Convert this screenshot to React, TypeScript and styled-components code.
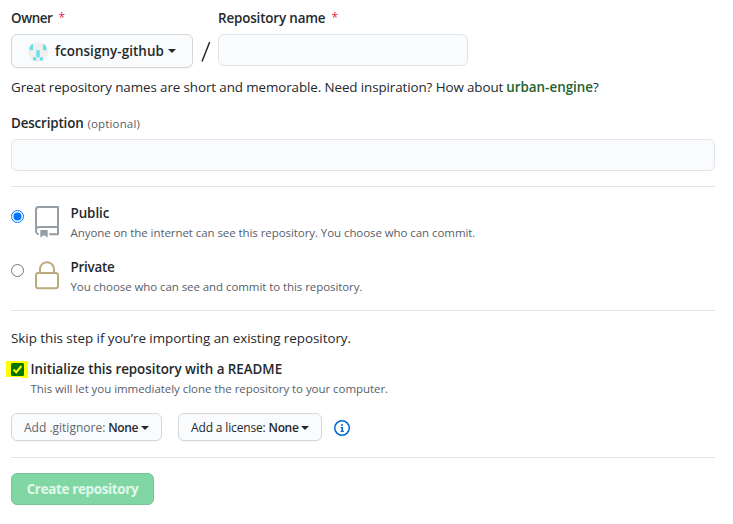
import React from "react";
import styled, { createGlobalStyle } from "styled-components";

const GlobalStyle = createGlobalStyle`
  * { box-sizing: border-box; }
  body {
    margin: 0;
    background: #fff;
    color: #24292e;
    font-family: "Open Sans", "Noto Sans", sans-serif;
    font-size: 13.4px;
    line-height: 20px;
  }
`;

const Form = styled.form`
  width: 733px;
  height: 524px;
  padding: 8px 18px 0 11px;
  overflow: hidden;
`;

const Text = styled.span<{ $spacing?: number }>`
  letter-spacing: ${(p) => p.$spacing ?? 0}px;
  white-space: nowrap;
`;

const Strong = styled(Text)`
  font-weight: 600;
`;

const NameRow = styled.div`
  display: flex;
  align-items: flex-start;
  height: 69px;
`;

const Field = styled.div`
  display: flex;
  flex-direction: column;
  gap: 6px;
`;

const Label = styled.label`
  display: flex;
  align-items: center;
  height: 20px;
  white-space: nowrap;
`;

const Required = styled.span`
  margin-left: 6px;
  color: #e5263f;
  font-size: 12px;
  font-weight: 500;
`;

const Optional = styled(Text)`
  margin-left: 4px;
  padding-top: 1px;
  color: #586069;
  font-size: 11.5px;
  font-weight: 500;
`;

const Input = styled.input<{ $width: string }>`
  display: block;
  width: ${(p) => p.$width};
  height: 32px;
  border: 1px solid #e1e4e8;
  border-radius: 6px;
  background: #fafbfc;
  outline: none;
`;

const Button = styled.button<{ $width: number; $height: number; $pad: number }>`
  display: flex;
  align-items: center;
  width: ${(p) => p.$width}px;
  height: ${(p) => p.$height}px;
  padding: 0 0 0 ${(p) => p.$pad}px;
  border: 1px solid #d5d8da;
  border-radius: 6px;
  background: #fafbfc;
  box-shadow: 0 1px 0 rgba(27, 31, 35, 0.04);
  color: #24292e;
  font: inherit;
  white-space: nowrap;
`;

const SmallButton = styled(Button)`
  padding-top: 2px;
  font-size: 12px;
`;

const Prefix = styled(Text)<{ $muted?: boolean }>`
  margin-right: 3px;
  color: ${(p) => (p.$muted ? "#60676e" : "#24292e")};
`;

const Caret = styled.span<{ $gap: number }>`
  margin-left: ${(p) => p.$gap}px;
  border: 4px solid transparent;
  border-top-color: #24292e;
  border-bottom: 0;
`;

const AvatarIcon = styled.svg`
  flex: none;
  margin: 2px 7px 0 0;
`;

const Slash = styled.svg`
  margin: 33px 7px 0 8px;
`;

const Paragraph = styled.p`
  height: 20px;
  margin: 0;
  white-space: nowrap;
`;

const Suggestion = styled.strong`
  margin-left: 3px;
  color: #22622f;
  font-weight: 600;
`;

const Description = styled.div`
  display: flex;
  flex-direction: column;
  gap: 6px;
  margin-top: 16px;
`;

const Divider = styled.hr<{ $before: number; $after: number }>`
  height: 1px;
  margin: ${(p) => p.$before}px 0 ${(p) => p.$after}px;
  border: 0;
  background: #e1e4e8;
`;

const Visibility = styled.div`
  display: flex;
  flex-direction: column;
  gap: 14px;
`;

const Option = styled.label`
  display: grid;
  grid-template-columns: 20px 39.5px 1fr;
  height: 40px;
`;

const Radio = styled.svg`
  margin-top: 7px;
`;

const OptionIcon = styled.svg`
  margin-top: 3px;
`;

const Copy = styled.div`
  display: flex;
  flex-direction: column;
`;

const Note = styled(Text)`
  height: 20px;
  color: #586069;
  font-size: 11.5px;
`;

const ReadmeOption = styled.label`
  display: flex;
  gap: 2.5px;
  height: 40px;
  margin: 11px 0 0 -5px;
`;

const Checkbox = styled.svg`
  flex: none;
`;

const Selectors = styled.div`
  display: flex;
  align-items: center;
  gap: 16px;
  height: 28px;
  margin-top: 14px;
`;

const InfoIcon = styled.svg`
  margin: 1px 0 0 -4px;
`;

const Submit = styled.button`
  display: flex;
  align-items: center;
  justify-content: center;
  width: 143px;
  height: 32px;
  padding: 0;
  border: 1px solid #75c597;
  border-radius: 6px;
  background: #80d7a4;
  color: #e3f7eb;
  font: inherit;
`;

const SubmitText = styled(Text)`
  font-weight: 700;
`;

function Avatar() {
  return (
    <AvatarIcon width="20" height="20" viewBox="0 0 20 20">
      <clipPath id="round"><circle cx="10" cy="10" r="10" /></clipPath>
      <g clipPath="url(#round)">
        <rect width="20" height="20" fill="#f0f0f0" />
        <path fill="#68dfe6" d="M1.5 1.5h3.500v6.800H1.500zM15 1.500h3.500v6.800H15zM8.300 8.300h3.400v6.900H8.300zM5 15.200h3.300v3.300H5zM11.700 15.200H15v3.300h-3.300z" />
      </g>
    </AvatarIcon>
  );
}

function RadioMark({ checked }: { checked?: boolean }) {
  return (
    <Radio width="13" height="13" viewBox="0 0 13 13">
      <circle cx="6.5" cy="6.5" r="6" fill="#fff" stroke={checked ? "#0075ff" : "#767676"} />
      {checked && <circle cx="6.5" cy="6.5" r="4" fill="#0075ff" />}
    </Radio>
  );
}

export default function App() {
  return (
    <>
      <GlobalStyle />
      <Form onSubmit={(e) => e.preventDefault()}>
        <NameRow>
          <Field>
            <Label><Strong $spacing={-0.4}>Owner</Strong><Required>*</Required></Label>
            <Button type="button" $width={182} $height={34} $pad={16}>
              <Avatar />
              <Strong $spacing={0.08}>fconsigny-github</Strong>
              <Caret $gap={4} />
            </Button>
          </Field>
          <Slash width="10" height="22" viewBox="0 0 10 22">
            <path d="M8.7 1L1 20.5" stroke="#24292e" strokeWidth="1.5" />
          </Slash>
          <Field>
            <Label><Strong $spacing={-0.15}>Repository name</Strong><Required>*</Required></Label>
            <Input $width="250px" aria-label="Repository name" />
          </Field>
        </NameRow>
        <Paragraph>
          <Text $spacing={-0.1}>Great repository names are short and memorable. Need inspiration? How about</Text>
          <Suggestion>urban-engine</Suggestion>?
        </Paragraph>

        <Description>
          <Label><Strong $spacing={-0.16}>Description</Strong><Optional $spacing={0.15}>(optional)</Optional></Label>
          <Input $width="100%" aria-label="Description" />
        </Description>
        <Divider $before={15} $after={16} />

        <Visibility>
          <Option>
            <RadioMark checked />
            <OptionIcon width="32" height="32" viewBox="0 0 24 24" fill="#959da5" fillRule="evenodd">
              <path d="M3 2.75A2.75 2.75 0 015.75 0h14.5a.75.75 0 01.75.75v20.5a.75.75 0 01-.75.75h-6a.75.75 0 010-1.5h5.25v-4H6A1.500 1.500 0 004.500 18v.75c0 .716.430 1.334 1.050 1.605a.75.75 0 01-.600 1.374A3.251 3.251 0 013 18.750zM19.500 1.500V15H6c-.546 0-1.059.146-1.500.401V2.750c0-.690.560-1.250 1.250-1.250z" />
              <path d="M7 18.250a.25.25 0 01.25-.25h5a.25.25 0 01.25.25v5.010a.25.25 0 01-.397.201l-2.206-1.604a.25.25 0 00-.294 0L7.397 23.460a.25.25 0 01-.397-.200z" />
            </OptionIcon>
            <Copy>
              <Strong $spacing={-0.06}>Public</Strong>
              <Note $spacing={-0.07}>Anyone on the internet can see this repository. You choose who can commit.</Note>
            </Copy>
          </Option>
          <Option>
            <RadioMark />
            <OptionIcon width="32" height="32" viewBox="0 0 24 24" fill="#bcab7e" fillRule="evenodd">
              <path d="M6 9V7.250C6 3.845 8.503 1 12 1s6 2.845 6 6.250V9h.500a2.500 2.500 0 012.500 2.500v8a2.500 2.500 0 01-2.500 2.500h-13A2.500 2.500 0 013 19.500v-8A2.500 2.500 0 015.500 9zm1.500-1.750C7.500 4.580 9.422 2.500 12 2.500s4.500 2.080 4.500 4.750V9h-9zm-3 4.250a1 1 0 011-1h13a1 1 0 011 1v8a1 1 0 01-1 1h-13a1 1 0 01-1-1z" />
            </OptionIcon>
            <Copy>
              <Strong $spacing={-0.25}>Private</Strong>
              <Note $spacing={-0.07}>You choose who can see and commit to this repository.</Note>
            </Copy>
          </Option>
        </Visibility>
        <Divider $before={13} $after={17} />

        <Paragraph><Text $spacing={-0.03}>Skip this step if you’re importing an existing repository.</Text></Paragraph>
        <ReadmeOption>
          <Checkbox width="22" height="20" viewBox="0 0 22 20">
            <path d="M0 2h21v1h1v16h-6v-1H0z" fill="#ff0" />
            <rect x="5" y="4" width="13" height="13" rx="1.500" fill="#007500" />
            <path d="M7.500 10.500l2.700 2.700 5.200-6.200" fill="none" stroke="#ff0" strokeWidth="2" />
          </Checkbox>
          <Copy>
            <Strong $spacing={-0.05}>Initialize this repository with a README</Strong>
            <Note $spacing={-0.05}>This will let you immediately clone the repository to your computer.</Note>
          </Copy>
        </ReadmeOption>

        <Selectors>
          <SmallButton type="button" $width={151} $height={28} $pad={12}>
            <Prefix $muted>Add .gitignore:</Prefix><Strong $spacing={-0.35}>None</Strong><Caret $gap={3} />
          </SmallButton>
          <SmallButton type="button" $width={144} $height={28} $pad={12}>
            <Prefix $spacing={-0.15}>Add a license:</Prefix><Strong $spacing={-0.35}>None</Strong><Caret $gap={3} />
          </SmallButton>
          <InfoIcon width="16" height="16" viewBox="0 0 16 16" fill="#0366d6" fillRule="evenodd">
            <path d="M8 1.500a6.500 6.500 0 100 13 6.500 6.500 0 000-13zM0 8a8 8 0 1116 0A8 8 0 010 8zm6.500-.25A.75.75 0 017.250 7h1a.75.75 0 01.75.75v2.750h.25a.75.75 0 010 1.500h-2a.75.75 0 010-1.500h.25v-2h-.25a.75.75 0 01-.75-.75zM8 6a1 1 0 100-2 1 1 0 000 2z" />
          </InfoIcon>
        </Selectors>
        <Divider $before={16} $after={15} />
        <Submit type="submit"><SubmitText $spacing={-0.32}>Create repository</SubmitText></Submit>
      </Form>
    </>
  );
}
